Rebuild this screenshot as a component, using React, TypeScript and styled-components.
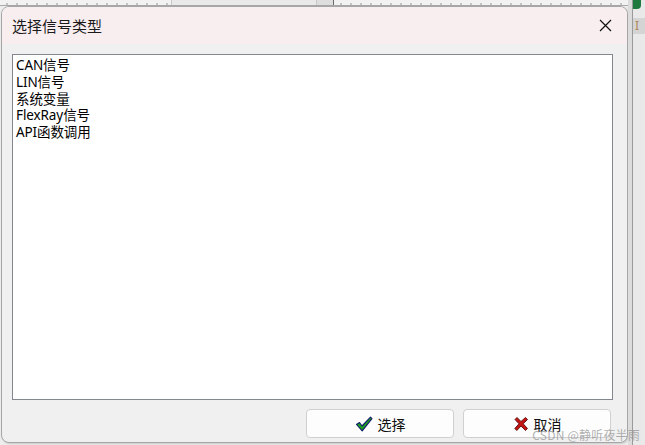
import React from "react";
import styled, { createGlobalStyle } from "styled-components";

const Global = createGlobalStyle`
  html, body { margin: 0; padding: 0; background: #f3f3f3; overflow: hidden; }
  #root { width: 645px; height: 445px; }
`;

const Page = styled.div`
  position: relative;
  width: 645px;
  height: 445px;
  display: grid;
  grid-template-columns: 628px 17px;
  background: #ededed;
  overflow: hidden;
`;

const Backdrop = styled.div`
  display: grid;
  grid-template-rows: 6px 1fr;
`;

const TopStrip = styled.div`
  display: grid;
  grid-template-columns: 171px 145px 17px 1fr;
  background: #f2f2f2;
  border-bottom: 1px solid #a9a9a9;
  box-sizing: border-box;
`;

const Dotted = styled.div<{ $edge?: boolean }>`
  background-image: radial-gradient(circle, #8a8a8a 0.6px, transparent 0.8px);
  background-size: 10px 10px;
  background-position: 2px -1px;
  ${(p) => (p.$edge ? "border-left: 1px solid #6c6c6c;" : "")}
`;

const Plain = styled.div<{ $tone: string }>`
  background: ${(p) => p.$tone};
  border-left: 1px solid #c8c8c8;
`;

const Dialog = styled.div`
  display: flex;
  flex-direction: column;
  background: #f0f0f0;
  border: 1px solid #a6a6a6;
  border-radius: 8px;
  margin-left: 1px;
  margin-bottom: 2px;
  overflow: hidden;
  box-shadow: 1px 1px 2px rgba(0, 0, 0, 0.15);
`;

const TitleBar = styled.div`
  height: 37px;
  display: flex;
  align-items: center;
  justify-content: space-between;
  padding: 0 14px 0 10px;
  background: #f8eef0;
`;

const Title = styled.div`
  font-family: "Noto Sans CJK SC", sans-serif;
  font-size: 15px;
  color: #1a1a1a;
`;

const CloseBtn = styled.div`
  width: 16px;
  height: 16px;
  display: flex;
  align-items: center;
  justify-content: center;
`;

const Body = styled.div`
  flex: 1;
  display: flex;
  flex-direction: column;
  padding: 10px 14px 4px 10px;
  gap: 9px;
`;

const ListBox = styled.div`
  flex: 1;
  background: #ffffff;
  border: 1px solid #828790;
  padding: 2px 3px;
  display: flex;
  flex-direction: column;
`;

const Item = styled.div`
  font-family: "Noto Sans", "Noto Sans CJK SC", sans-serif;
  font-size: 13.5px;
  line-height: 16.8px;
  color: #000;
  letter-spacing: -0.1px;
`;

const ButtonRow = styled.div`
  display: flex;
  justify-content: flex-end;
  gap: 9px;
  padding-right: 2px;
`;

const Button = styled.div`
  width: 146px;
  height: 27px;
  border: 1px solid #d0d0d0;
  border-radius: 4px;
  background: #fdfdfd;
  display: flex;
  align-items: center;
  justify-content: center;
  gap: 5px;
  font-family: "Noto Sans CJK SC", sans-serif;
  font-size: 14px;
  color: #111;
`;

const Side = styled.div`
  display: grid;
  grid-template-columns: 5px 1fr;
  background: #e4e4e4;
`;

const SideLine = styled.div`
  border-right: 1px solid #9a9a9a;
  background: #dcdcdc;
`;

const SideInner = styled.div`
  display: flex;
  flex-direction: column;
  background: #e9e9e9;
`;

const GreenIcon = styled.div`
  width: 8px;
  height: 11px;
  background: #1f7a3f;
  border-radius: 0 0 4px 0;
  margin-top: -2px;
`;

const SideTab = styled.div`
  margin-top: 9px;
  height: 16px;
  background: #d4d4d4;
  font-family: "Noto Sans", sans-serif;
  font-size: 12px;
  color: #b0875a;
  padding-left: 2px;
  line-height: 16px;
`;

const Watermark = styled.div`
  position: absolute;
  right: 5px;
  bottom: 3px;
  font-family: "Noto Sans CJK SC", sans-serif;
  font-size: 12px;
  line-height: 14px;
  color: rgba(150, 150, 150, 0.75);
  letter-spacing: 0.2px;
`;

const Check = () => (
  <svg width="18" height="16" viewBox="0 0 18 16">
    <path
      d="M1.5 8.5 L4.5 6.5 L7 10 L15.5 1.2 L17 2.6 L7.2 14.8 Z"
      fill="#1f9e1f"
      stroke="#101a6a"
      strokeWidth="1.1"
      strokeLinejoin="round"
    />
  </svg>
);

const Cross = () => (
  <svg width="16" height="16" viewBox="0 0 16 16">
    <path
      d="M2 3.5 L4 1.5 L8 5.5 L12.5 1.5 L14.5 3.5 L10.2 7.8 L14.5 12.5 L12.5 14.5 L8 10 L3.8 14.5 L1.8 12.5 L6 7.8 Z"
      fill="#c41414"
      stroke="#5a0a0a"
      strokeWidth="0.9"
      strokeLinejoin="round"
    />
  </svg>
);

const items = ["CAN信号", "LIN信号", "系统变量", "FlexRay信号", "API函数调用"];

export default function App() {
  return (
    <>
      <Global />
      <Page>
        <Backdrop>
          <TopStrip>
            <Dotted />
            <Plain $tone="#e9e9e9" />
            <Plain $tone="#dedede" />
            <Dotted $edge />
          </TopStrip>
          <Dialog>
            <TitleBar>
              <Title>选择信号类型</Title>
              <CloseBtn>
                <svg width="13" height="13" viewBox="0 0 13 13">
                  <path d="M1 1 L12 12 M12 1 L1 12" stroke="#111" strokeWidth="1.2" />
                </svg>
              </CloseBtn>
            </TitleBar>
            <Body>
              <ListBox>
                {items.map((t) => (
                  <Item key={t}>{t}</Item>
                ))}
              </ListBox>
              <ButtonRow>
                <Button>
                  <Check />
                  选择
                </Button>
                <Button>
                  <Cross />
                  取消
                </Button>
              </ButtonRow>
            </Body>
          </Dialog>
        </Backdrop>
        <Side>
          <SideLine />
          <SideInner>
            <GreenIcon />
            <SideTab>I</SideTab>
          </SideInner>
        </Side>
        <Watermark>CSDN @静听夜半雨</Watermark>
      </Page>
    </>
  );
}
